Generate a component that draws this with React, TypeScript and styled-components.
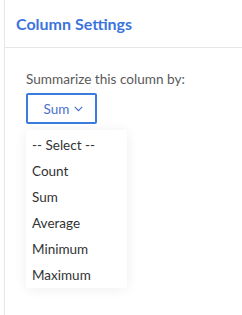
import React, { useState } from "react";
import styled, { createGlobalStyle } from "styled-components";

const GlobalStyle = createGlobalStyle`
  html, body {
    margin: 0;
    padding: 0;
    background: #ffffff;
    font-family: "Lato", "Open Sans", sans-serif;
  }
`;

const Panel = styled.div`
  width: 238px;
  height: 315px;
  margin-left: 4px;
  border-left: 1px solid #e6e6e6;
  box-sizing: border-box;
`;

const Header = styled.div`
  height: 48px;
  padding: 0 0 0 11px;
  display: flex;
  align-items: center;
  border-bottom: 1px solid #e6e6e6;
  box-sizing: border-box;
`;

const Title = styled.h2`
  margin: 0;
  font-size: 16px;
  font-weight: 700;
  color: #3b74dc;
`;

const Body = styled.div`
  padding: 22px 0 0 21px;
`;

const Label = styled.div`
  font-size: 13.6px;
  color: #5a5a5a;
  line-height: 18px;
`;

const SelectButton = styled.button`
  margin-top: 5px;
  width: 71px;
  height: 31px;
  display: flex;
  align-items: center;
  justify-content: center;
  gap: 5px;
  background: #fff;
  border: 2px solid #3b7ddd;
  border-radius: 2px;
  font-family: inherit;
  font-size: 13.5px;
  color: #4a6fd0;
  padding: 0 0 0 4px;
  cursor: pointer;
`;

const Menu = styled.ul`
  list-style: none;
  margin: 6px 0 0 0;
  padding: 2px 0 0 0;
  width: 101px;
  background: #fff;
  box-shadow: 0 1px 12px rgba(0, 0, 0, 0.07);
`;

const Item = styled.li<{ $active?: boolean }>`
  height: 26px;
  display: flex;
  align-items: center;
  padding-left: 6px;
  font-size: 13.5px;
  color: #333;
  background: ${(p) => (p.$active ? "#f4f7fd" : "transparent")};
  cursor: pointer;
`;

const options = ["-- Select --", "Count", "Sum", "Average", "Minimum", "Maximum"];

function Chevron() {
  return (
    <svg width="9" height="6" viewBox="0 0 9 6" fill="none">
      <path d="M0.8 0.8 L4.5 4.6 L8.2 0.8" stroke="#4a6fd0" strokeWidth="1.2" />
    </svg>
  );
}

export default function App() {
  const [value] = useState("Sum");
  return (
    <>
      <GlobalStyle />
      <Panel>
        <Header>
          <Title>Column Settings</Title>
        </Header>
        <Body>
          <Label>Summarize this column by:</Label>
          <SelectButton>
            {value}
            <Chevron />
          </SelectButton>
          <Menu>
            {options.map((o) => (
              <Item key={o}>{o}</Item>
            ))}
          </Menu>
        </Body>
      </Panel>
    </>
  );
}
